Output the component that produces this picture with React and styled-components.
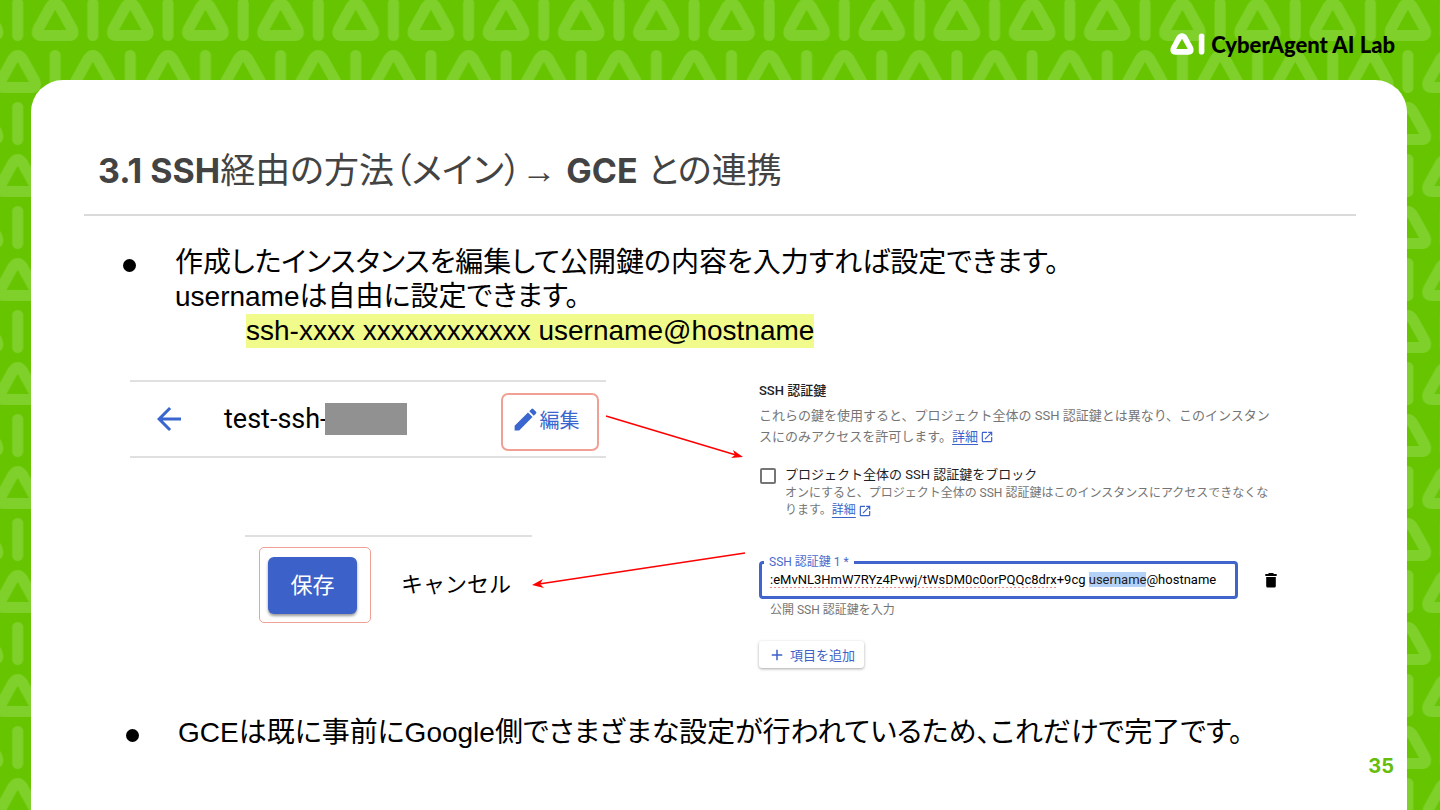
import React, { useEffect, useRef, useState } from 'react'
import styled, { createGlobalStyle } from 'styled-components'
import { MdArrowBack, MdEdit, MdOpenInNew, MdAdd } from 'react-icons/md'

const KEY_TEXT = ':eMvNL3HmW7RYz4Pvwj/tWsDM0c0orPQQc8drx+9cg username@hostname'

function Pattern() {
  const tri = 'M-4.5 -34.5 Q0 -40.5 4.5 -34.5 L17 -12 Q19.5 -5.5 14 -5.5 H-14 Q-19.5 -5.5 -17 -12 Z'
  return (
    <PatternSvg aria-hidden="true">
      <defs>
        <pattern id="ai" width="75.15" height="104" y="-3" x="-20" patternUnits="userSpaceOnUse">
          <g stroke="#7fd02a" strokeWidth="11" fill="none" strokeLinecap="round" strokeLinejoin="round">
            <path d="M37.7 6.5v32" />
            <path d={tri} transform="translate(75.15 44)" />
            <path d={tri} transform="translate(0 44)" />
            <path d="M0 58.5v32M75.15 58.5v32" />
            <path d={tri} transform="translate(37.7 96)" />
          </g>
        </pattern>
      </defs>
      <rect width="100%" height="100%" fill="url(#ai)" />
    </PatternSvg>
  )
}

function LogoMark() {
  return (
    <svg width="35" height="22" viewBox="0 0 35 22" fill="none" stroke="#fff" strokeWidth="5.6" strokeLinecap="round" strokeLinejoin="round" aria-hidden="true">
      <path d="M12 3Q13.8 3 15 5.2L20.2 14.6Q22 18.9 18.4 18.9H5.6Q2 18.9 3.8 14.6L9 5.2Q10.2 3 12 3Z" />
      <path d="M31.6 3.2v15.6" />
    </svg>
  )
}

function TrashIcon() {
  return (
    <svg width="14" height="16" viewBox="0 0 14 16" fill="#000" aria-hidden="true">
      <path d="M4.5 1h5v1h3.2v2H1.3V2h3.2zM2.2 5h9.6v9q0 1.5-1.5 1.5H3.7q-1.5 0-1.5-1.5z" />
    </svg>
  )
}

function Arrows() {
  return (
    <ArrowSvg width="216" height="212" viewBox="0 0 216 212" aria-hidden="true">
      <g stroke="#f00" strokeWidth="1.5">
        <path d="M76 36L206 75" />
        <path d="M215 173L9 204" />
      </g>
      <g fill="#f00">
        <path d="M213 77L201 78L205 75L203 70Z" />
        <path d="M2 205L13 199L10 204L14 208Z" />
      </g>
    </ArrowSvg>
  )
}

function KeyField() {
  const [value, setValue] = useState(KEY_TEXT)
  const input = useRef(null)

  useEffect(() => {
    const start = KEY_TEXT.indexOf('username')
    input.current.focus({ preventScroll: true })
    input.current.setSelectionRange(start, start + 8)
  }, [])

  return (
    <div>
      <FieldRow>
        <Field>
          <FieldLabel htmlFor="ssh-key">SSH 認証鍵 1 *</FieldLabel>
          <KeyInput
            id="ssh-key"
            ref={input}
            value={value}
            spellCheck={false}
            onChange={(e) => setValue(e.target.value)}
          />
        </Field>
        <IconButton aria-label="削除"><TrashIcon /></IconButton>
      </FieldRow>
      <Helper>公開 SSH 認証鍵を入力</Helper>
    </div>
  )
}

function App() {
  return (
    <Slide>
      <GlobalStyle />
      <Pattern />
      <Header>
        <LogoMark />
        <LogoText>CyberAgent AI Lab</LogoText>
      </Header>
      <Card>
        <Title>
          <b>3.1 SSH</b>経由の方法（メイン）<i>→</i> <b>GCE</b> との連携
        </Title>
        <Bullets>
          <li>
            作成したインスタンスを編集して公開鍵の内容を入力すれば設定できます。
            <br />
            usernameは自由に設定できます。
            <Example><mark>ssh-xxxx xxxxxxxxxxxx username@hostname</mark></Example>
          </li>
        </Bullets>

        <Figures>
          <div>
            <TopBar>
              <BackButton aria-label="戻る"><MdArrowBack size={36} /></BackButton>
              <InstanceName>test-ssh-<Redacted /></InstanceName>
              <EditButton><MdEdit size={29} />編集</EditButton>
            </TopBar>
            <SaveBar>
              <SaveFrame><SaveButton>保存</SaveButton></SaveFrame>
              <CancelButton>キャンセル</CancelButton>
            </SaveBar>
          </div>

          <Settings>
            <h2>SSH 認証鍵</h2>
            <Note>
              これらの鍵を使用すると、プロジェクト全体の SSH 認証鍵とは異なり、このインスタン<br />
              スにのみアクセスを許可します。<a href="#">詳細<MdOpenInNew size={14} /></a>
            </Note>
            <CheckRow>
              <input type="checkbox" id="block" />
              <div>
                <label htmlFor="block">プロジェクト全体の SSH 認証鍵をブロック</label>
                <SmallNote>
                  オンにすると、プロジェクト全体の SSH 認証鍵はこのインスタンスにアクセスできなくな<br />
                  ります。<a href="#">詳細<MdOpenInNew size={14} /></a>
                </SmallNote>
              </div>
            </CheckRow>
            <KeyField />
            <AddButton><MdAdd size={18} />項目を追加</AddButton>
          </Settings>
          <Arrows />
        </Figures>

        <LastBullets>
          <li>GCEは既に事前にGoogle側でさまざまな設定が行われているため、これだけで完了です。</li>
        </LastBullets>
        <PageNumber>35</PageNumber>
      </Card>
    </Slide>
  )
}

export default App

const GlobalStyle = createGlobalStyle`
  * { box-sizing: border-box; }
  body { margin: 0; }
  button, input {
    font: inherit;
    color: inherit;
  }
  button {
    padding: 0;
    border: 0;
    background: none;
    cursor: pointer;
  }
`
const Slide = styled.div`
  position: relative;
  display: flex;
  flex-direction: column;
  min-height: 100vh;
  background: #66c500;
  font-family: "Liberation Sans", "Noto Sans CJK JP", sans-serif;
  color: #000;
`
const PatternSvg = styled.svg`
  position: absolute;
  inset: 0;
  width: 100%;
  height: 100%;
`
const Header = styled.header`
  position: relative;
  display: flex;
  align-items: center;
  justify-content: flex-end;
  gap: 6px;
  height: 80px;
  padding: 8px 45px 0 0;
`
const LogoText = styled.span`
  font: 900 22px Lato, sans-serif;
`
const Card = styled.main`
  position: relative;
  flex: 1;
  display: flex;
  flex-direction: column;
  margin: 0 33px 0 31px;
  padding: 60px 51px 0 53px;
  background: #fff;
  border-radius: 32px 32px 0 0;
`
const Title = styled.h1`
  margin: 0;
  padding: 0 14px 12px;
  border-bottom: 2px solid #dadada;
  font: 400 35px/60px Inter, "Noto Sans CJK JP", sans-serif;
  font-feature-settings: "palt";
  color: #434343;

  b {
    font-size: 34px;
    font-weight: 700;
  }
  i {
    font-family: "Liberation Serif", serif;
    font-style: normal;
  }
`
const Bullets = styled.ul`
  margin: 30px 0 0;
  padding: 0 0 0 91px;
  list-style: none;
  font-size: 28px;
  line-height: 34px;
  font-feature-settings: "palt";

  li::before {
    content: "";
    float: left;
    width: 13px;
    height: 13px;
    margin: 13px 0 0 -52px;
    border-radius: 50%;
    background: #000;
  }
`
const LastBullets = styled(Bullets)`
  margin-top: 48px;
  padding-left: 94px;
`
const Example = styled.div`
  padding-left: 71px;

  mark {
    display: inline-block;
    background: #f0fb8c;
    color: inherit;
  }
`
const Figures = styled.div`
  position: relative;
  display: grid;
  grid-template-columns: 476px 1fr;
  gap: 153px;
  margin: 32px 0 0 46px;
  font-family: Roboto, "Noto Sans CJK JP", sans-serif;
`
const ArrowSvg = styled.svg`
  position: absolute;
  left: 400px;
  top: 0;
`
const TopBar = styled.div`
  display: flex;
  align-items: center;
  height: 78px;
  padding: 0 7px 0 21px;
  border: solid #e0e0e0;
  border-width: 2px 0;
`
const BackButton = styled.button`
  display: flex;
  color: #3a66cf;
`
const InstanceName = styled.div`
  display: flex;
  align-items: center;
  margin: 0 auto 0 37px;
  font-size: 27px;
`
const Redacted = styled.span`
  width: 82px;
  height: 32px;
  margin-left: -3px;
  background: #919191;
`
const EditButton = styled.button`
  display: flex;
  align-items: center;
  align-self: flex-end;
  justify-content: center;
  width: 98px;
  height: 58px;
  margin-bottom: 5px;
  padding: 0 10px 6px 0;
  border: 2px solid #f0a094;
  border-radius: 7px;
  font-size: 20px;
  color: #3a66cf;
`
const SaveBar = styled.div`
  display: flex;
  align-items: center;
  gap: 30px;
  width: 287px;
  margin: 77px 0 0 115px;
  padding: 10px 0 0 14px;
  border-top: 2px solid #e0e0e0;
  font-size: 22px;
`
const SaveFrame = styled.div`
  width: 112px;
  height: 76px;
  padding: 9px 8px;
  border: 1px solid #f0a094;
  border-radius: 5px;
`
const SaveButton = styled.button`
  width: 89px;
  height: 57px;
  padding-bottom: 6px;
  border-radius: 6px;
  background: #3c61c8;
  box-shadow: 0 2px 3px rgba(0, 0, 0, 0.4);
  color: #fff;
`
const CancelButton = styled.button`
  padding-bottom: 6px;
  white-space: nowrap;
`
const Settings = styled.section`
  font-size: 13px;

  h2 {
    margin: 0;
    font-size: 13px;
    font-weight: 500;
    line-height: 21px;
    color: #202124;
  }
  a {
    display: inline-flex;
    align-items: center;
    gap: 2px;
    color: #3c61c8;
    text-decoration: underline;
    text-underline-offset: 3px;
  }
`
const Note = styled.p`
  margin: 4px 0 0;
  line-height: 21px;
  white-space: nowrap;
  color: #757575;
`
const CheckRow = styled.div`
  display: flex;
  gap: 9px;
  margin-top: 18px;

  input {
    appearance: none;
    flex: none;
    width: 16px;
    height: 16px;
    margin: 3px 0 0 1px;
    border: 2px solid #757575;
    border-radius: 2px;
  }
  input:checked {
    background: #3c61c8;
  }
  label {
    display: block;
    line-height: 20px;
    color: #202124;
  }
`
const SmallNote = styled(Note)`
  margin: 0;
  font-size: 12px;
  line-height: 17px;
`
const FieldRow = styled.div`
  display: flex;
  align-items: center;
  gap: 26px;
  margin-top: 42px;
`
const Field = styled.div`
  position: relative;
  width: 479px;
`
const FieldLabel = styled.label`
  position: absolute;
  left: 5px;
  top: -8px;
  padding: 0 5px;
  background: #fff;
  font-size: 12px;
  line-height: 18px;
  color: #4a6bcb;
`
/* the dotted line marks the key body as misspelled */
const KeyInput = styled.input`
  display: block;
  width: 100%;
  height: 38px;
  padding: 0 8px 2px;
  border: 3px solid #4064cb;
  border-radius: 4px;
  outline: 0;
  background: repeating-linear-gradient(90deg, #e88 0 2px, transparent 2px 4px) 8px 23px / 286px 1px no-repeat;
  font-size: 13px;
  caret-color: transparent;

  &::selection {
    background: #b4d1f8;
    color: #202124;
  }
`
const IconButton = styled.button`
  display: flex;
`
const Helper = styled.p`
  margin: 2px 0 0 11px;
  font-size: 12px;
  line-height: 18px;
  color: #757575;
`
const AddButton = styled.button`
  display: flex;
  align-items: center;
  gap: 4px;
  height: 27px;
  margin-top: 22px;
  padding: 0 9px;
  border-radius: 3px;
  box-shadow: 0 1px 3px rgba(0, 0, 0, 0.35);
  color: #3c61c8;
`
const PageNumber = styled.footer`
  margin: 4px -38px 0 0;
  text-align: right;
  font: 700 20px/24px Inter, sans-serif;
  color: #66bd0c;
`
